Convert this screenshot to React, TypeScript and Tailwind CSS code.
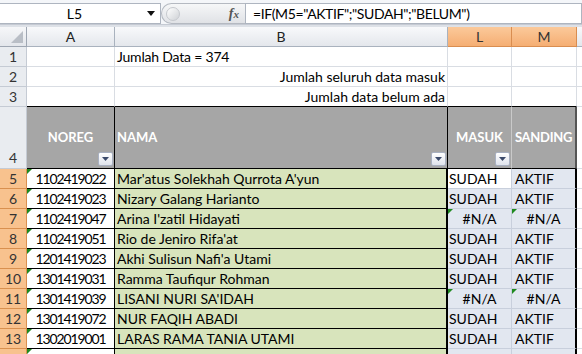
import React from "react";

const rows = [
  { n: 5, id: "1102419022", name: "Mar'atus Solekhah Qurrota A'yun", l: "SUDAH", m: "AKTIF" },
  { n: 6, id: "1102419023", name: "Nizary Galang Harianto", l: "SUDAH", m: "AKTIF" },
  { n: 7, id: "1102419047", name: "Arina I'zatil Hidayati", l: "#N/A", m: "#N/A" },
  { n: 8, id: "1102419051", name: "Rio de Jeniro Rifa'at", l: "SUDAH", m: "AKTIF" },
  { n: 9, id: "1201419023", name: "Akhi Sulisun Nafi'a Utami", l: "SUDAH", m: "AKTIF" },
  { n: 10, id: "1301419031", name: "Ramma Taufiqur Rohman", l: "SUDAH", m: "AKTIF" },
  { n: 11, id: "1301419039", name: "LISANI NURI SA'IDAH", l: "#N/A", m: "#N/A" },
  { n: 12, id: "1301419072", name: "NUR FAQIH ABADI", l: "SUDAH", m: "AKTIF" },
  { n: 13, id: "1302019001", name: "LARAS RAMA TANIA UTAMI", l: "SUDAH", m: "AKTIF" },
  { n: 14, id: "", name: "", l: "", m: "" },
];

function Tri() {
  return (
    <span className="absolute left-0 top-0 h-0 w-0 border-t-[5px] border-r-[5px] border-t-[#1f8a1f] border-r-transparent" />
  );
}

function Drop() {
  return (
    <span className="absolute bottom-[2px] right-[1px] flex h-[14px] w-[15px] items-center justify-center rounded-[2px] border border-[#a9b1c2] bg-gradient-to-b from-[#ffffff] to-[#dfe3ec]">
      <svg width="7" height="4" viewBox="0 0 7 4">
        <path d="M0 0 L7 0 L3.5 4 Z" fill="#3b4a6b" />
      </svg>
    </span>
  );
}

export default function App() {
  const rh = "flex items-end justify-center text-[#333] text-[14px] border-r border-b";
  const grid = "border-r border-b border-[#d9dde3]";
  return (
    <div className="h-[354px] w-[582px] overflow-hidden bg-white font-['Lato','Open_Sans',sans-serif] text-[14px] leading-none text-black">
      {/* formula bar */}
      <div className="flex h-[25px] items-stretch border-b border-[#c5cad3] bg-[#f4f6f9] pt-[3px]">
        <div className="flex w-[161px] items-center border-t border-b border-r border-[#aeb5c0] bg-white">
          <div className="flex-1 text-center pl-[2px]">L5</div>
          <svg width="8" height="5" viewBox="0 0 8 5" className="mr-[5px]">
            <path d="M0 0 L8 0 L4 5 Z" fill="#111" />
          </svg>
        </div>
        <div className="relative flex w-[84px] items-center rounded-l-[11px] border border-r-0 border-[#b4b9c1] bg-gradient-to-b from-[#f6f7f8] to-[#e0e2e6]">
          <span className="ml-[4px] h-[14px] w-[14px] rounded-full border border-[#c6c9ce] bg-gradient-to-br from-[#ffffff] to-[#cfd2d6]" />
          <span className="ml-auto mr-[6px] font-['Liberation_Serif',serif] text-[14px] font-bold italic text-[#555]">
            f<span className="text-[11px]">x</span>
          </span>
        </div>
        <div className="flex flex-1 items-center border border-[#aeb5c0] bg-white pl-[7px] text-[14px] tracking-[-0.4px]">
          =IF(M5="AKTIF";"SUDAH";"BELUM")
        </div>
      </div>
      <div className="h-[2px] bg-[#dde1e7]" />

      {/* sheet */}
      <div className="grid grid-cols-[27px_88px_333px_64px_65px_5px]">
        {/* column headers */}
        <div className="relative h-[20px] border-r border-b border-[#9ea6b2] bg-gradient-to-b from-[#f6f7f9] to-[#e3e6eb]">
          <span className="absolute bottom-[3px] right-[3px] h-0 w-0 border-b-[12px] border-l-[12px] border-b-[#b9bec6] border-l-transparent" />
        </div>
        {["A", "B"].map((c) => (
          <div
            key={c}
            className="flex h-[20px] items-center justify-center border-r border-b border-[#a9b2be] bg-gradient-to-b from-[#f8f9fb] to-[#e4e7ec] text-[#222]"
          >
            {c}
          </div>
        ))}
        {["L", "M"].map((c) => (
          <div
            key={c}
            className="flex h-[20px] items-center justify-center border-r border-b border-[#d98d50] bg-gradient-to-b from-[#fbc99a] to-[#f5ae73] text-[#333]"
          >
            {c}
          </div>
        ))}
        <div className="h-[20px] border-b border-[#a9b2be] bg-gradient-to-b from-[#f8f9fb] to-[#e4e7ec]" />

        {/* row 1 */}
        <div className={`${rh} h-[20px] border-[#c5cbd4] bg-[#e9ecf0] pb-[2px]`}>1</div>
        <div className={`${grid} h-[20px]`} />
        <div className={`${grid} flex h-[20px] items-center pl-[2px] tracking-[-0.2px]`}>Jumlah Data = 374</div>
        <div className={`${grid} h-[20px]`} />
        <div className={`${grid} h-[20px]`} />
        <div className="h-[20px] border-b border-[#d9dde3]" />

        {/* row 2 */}
        <div className={`${rh} h-[20px] border-[#c5cbd4] bg-[#e9ecf0] pb-[2px]`}>2</div>
        <div className={`${grid} h-[20px]`} />
        <div className={`${grid} flex h-[20px] items-center justify-end pr-[2px]`}>Jumlah seluruh data masuk</div>
        <div className={`${grid} h-[20px]`} />
        <div className={`${grid} h-[20px]`} />
        <div className="h-[20px] border-b border-[#d9dde3]" />

        {/* row 3 */}
        <div className={`${rh} h-[20px] border-[#c5cbd4] bg-[#e9ecf0] pb-[2px]`}>3</div>
        <div className="h-[20px] border-r border-[#d9dde3] border-b border-b-black" />
        <div className="flex h-[20px] items-center justify-end border-r border-[#d9dde3] border-b border-b-black pr-[2px]">
          Jumlah data belum ada
        </div>
        <div className="h-[20px] border-r border-[#d9dde3] border-b border-b-black" />
        <div className="h-[20px] border-r border-[#d9dde3] border-b border-b-black" />
        <div className="h-[20px] border-b border-[#d9dde3]" />

        {/* row 4 header */}
        <div className={`${rh} h-[62px] border-[#c5cbd4] bg-[#e9ecf0] pb-[3px]`}>4</div>
        <div className="relative flex h-[62px] items-center justify-center border-r border-b border-black bg-[#a6a6a6] text-[13px] font-bold text-white">
          NOREG
          <Drop />
        </div>
        <div className="relative flex h-[62px] items-center border-r border-b border-black bg-[#a6a6a6] pl-[2px] text-[13px] font-bold text-white">
          NAMA
          <Drop />
        </div>
        <div className="relative flex h-[62px] items-center justify-center border-r border-r-[#c9c9c9] border-b border-b-black bg-[#a6a6a6] text-[13px] font-bold text-white">
          MASUK
          <Drop />
        </div>
        <div className="flex h-[62px] items-center justify-center border-r-2 border-r-[#555] border-b border-b-black bg-[#a6a6a6] text-[13px] font-bold tracking-[-0.3px] text-white">
          SANDING
        </div>
        <div className="h-[62px] border-b border-[#d9dde3]" />

        {rows.map((r) => {
          const na = r.l === "#N/A";
          return (
            <React.Fragment key={r.n}>
              <div className={`${rh} h-[20px] border-[#d9904f] bg-[#f8c28e] pb-[2px]`}>{r.n === 14 ? "" : r.n}</div>
              <div className="relative flex h-[20px] items-center justify-center border-r border-b border-black bg-white tracking-[-1.1px]">
                <Tri />
                {r.id}
              </div>
              <div className="flex h-[20px] items-center border-r-2 border-b border-black bg-[#d8e4bc] pl-[2px]">
                {r.name}
              </div>
              <div
                className={`relative flex h-[20px] items-center border-r border-b border-[#c8cfdc] ${
                  r.n === 5 ? "bg-white" : "bg-[#e2e7f0]"
                } ${na ? "justify-center" : "pl-[1px]"}`}
              >
                {na && <Tri />}
                {r.l}
              </div>
              <div
                className={`relative flex h-[20px] items-center border-b border-[#c8cfdc] border-r-2 border-r-black bg-[#e2e7f0] ${
                  na ? "justify-center" : "pl-[3px]"
                }`}
              >
                {na && <Tri />}
                {r.m}
              </div>
              <div className="h-[20px] border-b border-[#d9dde3]" />
            </React.Fragment>
          );
        })}
      </div>
    </div>
  );
}
